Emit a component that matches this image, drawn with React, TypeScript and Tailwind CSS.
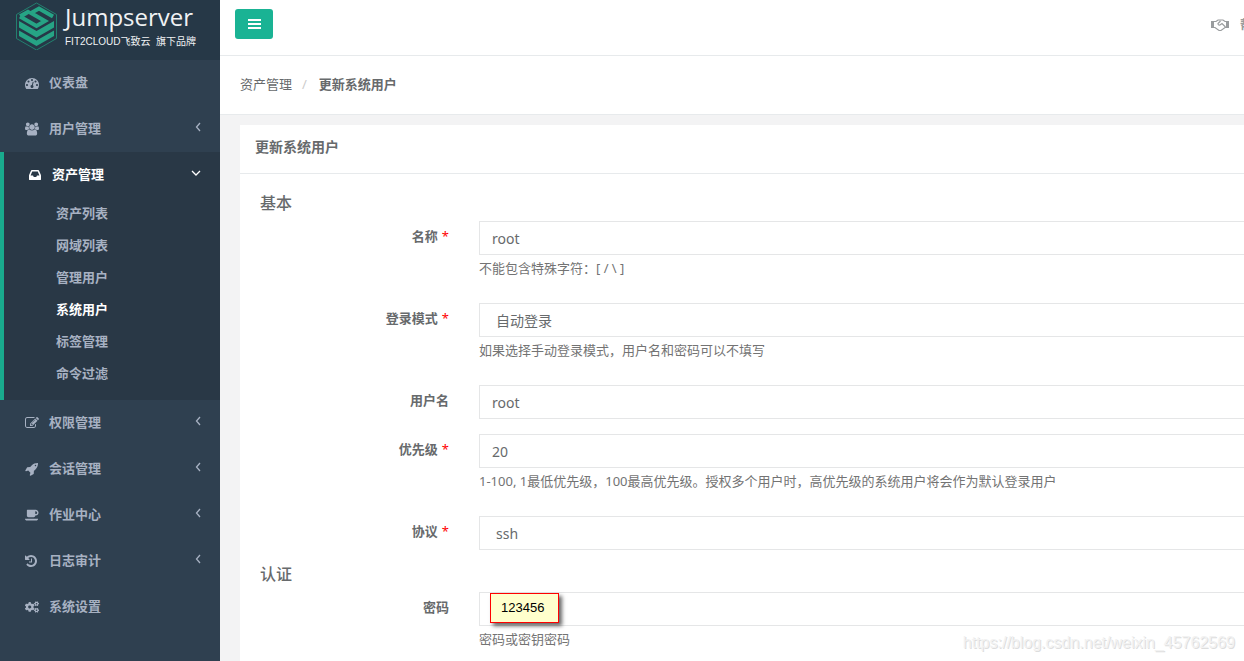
import type { ReactNode } from "react";
import { FaCogs, FaRegHandshake } from "react-icons/fa";

const icons = {
  dashboard: {
    box: "0 0 1792 1792",
    d: "M384 1152q0-53-37.5-90.5t-90.5-37.5-90.5 37.5-37.5 90.5 37.5 90.5 90.5 37.5 90.5-37.5 37.5-90.5zm192-448q0-53-37.5-90.5t-90.5-37.5-90.5 37.5-37.5 90.5 37.5 90.5 90.5 37.5 90.5-37.5 37.5-90.5zm428 481l101-382q6-26-7.5-48.5t-38.5-29.5-48 6.5-30 39.5l-101 382q-60 5-107 43.5t-63 98.5q-20 77 20 146t117 89 146-20 89-117q16-60-6-117t-72-91zm660-33q0-53-37.5-90.5t-90.5-37.5-90.5 37.5-37.5 90.5 37.5 90.5 90.5 37.5 90.5-37.5 37.5-90.5zm-640-640q0-53-37.5-90.5t-90.5-37.5-90.5 37.5-37.5 90.5 37.5 90.5 90.5 37.5 90.5-37.5 37.5-90.5zm448 192q0-53-37.5-90.5t-90.5-37.5-90.5 37.5-37.5 90.5 37.5 90.5 90.5 37.5 90.5-37.5 37.5-90.5zm320 448q0 261-141 483-19 29-54 29h-1402q-35 0-54-29-141-221-141-483 0-182 71-348t191-286 286-191 348-71 348 71 286 191 191 286 71 348z",
  },
  users: {
    box: "0 0 1920 1792",
    d: "M593 896q-162 5-265 128h-134q-82 0-138-40.5t-56-118.5q0-353 124-353 6 0 43.5 21t97.5 42.5 119 21.5q67 0 133-23-5 37-5 66 0 139 81 256zm1071 637q0 120-73 189.5t-194 69.5h-874q-121 0-194-69.5t-73-189.5q0-53 3.5-103.5t14-109 26.5-108.5 43-97.5 62-81 85.5-53.5 111.5-20q10 0 43 21.5t73 48 107 48 135 21.5 135-21.5 107-48 73-48 43-21.5q61 0 111.5 20t85.5 53.5 62 81 43 97.5 26.5 108.5 14 109 3.5 103.5zm-1024-1277q0 106-75 181t-181 75-181-75-75-181 75-181 181-75 181 75 75 181zm704 384q0 159-112.5 271.5t-271.5 112.5-271.5-112.5-112.5-271.5 112.5-271.5 271.5-112.5 271.5 112.5 112.5 271.5zm576 225q0 78-56 118.5t-138 40.5h-134q-103-123-265-128 81-117 81-256 0-29-5-66 66 23 133 23 59 0 119-21.5t97.5-42.5 43.5-21q124 0 124 353zm-128-609q0 106-75 181t-181 75-181-75-75-181 75-181 181-75 181 75 75 181z",
  },
  inbox: {
    box: "0 0 1792 1792",
    d: "M1151 960h316q-1-3-2.5-8.5t-2.5-7.5l-212-496h-708l-212 496q-1 3-2.5 8.5t-2.5 7.5h316l95 192h320zm513 30v482q0 26-19 45t-45 19h-1408q-26 0-45-19t-19-45v-482q0-62 25-123l238-552q10-25 36.5-42t52.5-17h832q26 0 52.5 17t36.5 42l238 552q25 61 25 123z",
  },
  edit: {
    box: "0 0 1792 1792",
    d: "M888 1184l116-116-152-152-116 116v56h96v96h56zm440-720q-16-16-33 1l-350 350q-17 17-1 33t33-1l350-350q17-17 1-33zm80 594v190q0 119-84.5 203.5t-203.5 84.5h-832q-119 0-203.5-84.5t-84.5-203.5v-832q0-119 84.5-203.5t203.5-84.5h832q63 0 117 25 15 7 18 23 3 17-9 29l-49 49q-14 14-32 8-23-6-45-6h-832q-66 0-113 47t-47 113v832q0 66 47 113t113 47h832q66 0 113-47t47-113v-126q0-13 9-22l64-64q15-15 35-7t20 29zm-96-738l288 288-672 672h-288v-288zm444 132l-92 92-288-288 92-92q28-28 68-28t68 28l152 152q28 28 28 68t-28 68z",
  },
  rocket: {
    box: "0 0 1792 1792",
    d: "M1440 448q0-40-28-68t-68-28-68 28-28 68 28 68 68 28 68-28 28-68zm224-288q0 249-75.5 430.5t-253.5 360.5q-81 80-195 176l-20 379q-2 16-16 26l-384 224q-7 4-16 4-12 0-23-9l-64-64q-13-14-8-32l85-276-281-281-276 85q-3 1-9 1-14 0-23-9l-64-64q-17-19-5-39l224-384q10-14 26-16l379-20q96-114 176-195 188-187 358-258t431-71q14 0 24 9.5t10 22.5z",
  },
  coffee: {
    box: "0 0 1920 1792",
    d: "M1664 576q0-80-56-136t-136-56h-64v384h64q80 0 136-56t56-136zm-1664 832h1792q0 106-75 181t-181 75h-1280q-106 0-181-75t-75-181zm1856-832q0 159-112.5 271.5t-271.5 112.5h-64v32q0 92-66 158t-158 66h-704q-92 0-158-66t-66-158v-736q0-26 19-45t45-19h1152q159 0 271.5 112.5t112.5 271.5z",
  },
  history: {
    box: "128 0 1792 1792",
    d: "M1664 896q0 156-61 298t-164 245-245 164-298 61q-172 0-327-72.5t-264-204.5q-7-10-6.5-22.5t8.5-20.5l137-138q10-9 25-9 16 2 23 12 73 95 179 147t225 52q104 0 198.5-40.5t163.5-109.5 109.5-163.5 40.5-198.5-40.5-198.5-109.5-163.5-163.5-109.5-198.5-40.5q-98 0-188 35.5t-160 101.5l137 138q31 30 14 69-17 40-59 40h-448q-26 0-45-19t-19-45v-448q0-42 40-59 39-17 69 14l130 129q107-101 244.5-156.5t284.5-55.5q156 0 298 61t245 164 164 245 61 298zm-640-288v448q0 14-9 23t-23 9h-320q-14 0-23-9t-9-23v-64q0-14 9-23t23-9h224v-352q0-14 9-23t23-9h64q14 0 23 9t9 23z",
  },
};

function Icon({ name }: { name: keyof typeof icons }) {
  return (
    <svg viewBox={icons[name].box} className="size-[14px] fill-current" aria-hidden="true">
      <path d={icons[name].d} />
    </svg>
  );
}

function Chevron({ open }: { open?: boolean }) {
  return (
    <svg
      viewBox="0 0 10 10"
      className="mb-1 ml-auto size-[10px] fill-none stroke-current stroke-[1.3]"
      aria-hidden="true"
    >
      <path d={open ? "M1 3L5 7l4-4" : "M7 1L3.500 5 7 9"} />
    </svg>
  );
}

const assetLinks = ["资产列表", "网域列表", "管理用户", "系统用户", "标签管理", "命令过滤"];

const menuTop: { label: string; icon: ReactNode; arrow: boolean }[] = [
  { label: "仪表盘", icon: <Icon name="dashboard" />, arrow: false },
  { label: "用户管理", icon: <Icon name="users" />, arrow: true },
];

const menuBottom: { label: string; icon: ReactNode; arrow: boolean }[] = [
  { label: "权限管理", icon: <Icon name="edit" />, arrow: true },
  { label: "会话管理", icon: <Icon name="rocket" />, arrow: true },
  { label: "作业中心", icon: <Icon name="coffee" />, arrow: true },
  { label: "日志审计", icon: <Icon name="history" />, arrow: true },
  { label: "系统设置", icon: <FaCogs className="size-[14px]" />, arrow: false },
];

function MenuItem({ label, icon, arrow }: { label: string; icon: ReactNode; arrow: boolean }) {
  return (
    <li>
      <a href="#" className="flex h-[46px] items-center pr-[17px] pl-[25px] hover:text-white">
        {icon}
        <span className="ml-[10px]">{label}</span>
        {arrow && <Chevron />}
      </a>
    </li>
  );
}

function Logo() {
  return (
    <svg viewBox="0 0 42 48" className="h-12 w-[42px]" aria-hidden="true">
      <path d="M21.500 1l20 11.500v24l-20 11.500-20-11.500v-24z" fill="none" stroke="#23806f" strokeWidth="1" />
      <path
        d="M38 14.500L24 6.500l-8 4.500 14 8-8.500 5L5 14.500"
        fill="none"
        stroke="#26a485"
        strokeWidth="4"
      />
      <g fill="#26a485">
        <path d="M4 12.500l9-5 4 2.500-10 6z" />
        <path d="M4 19l17.500 10L39 19v6.500l-17.500 10L4 25.500z" />
        <path d="M4 28.500l17.500 10 17.500-10V34l-17.500 10L4 34z" />
      </g>
    </svg>
  );
}

function Sidebar() {
  return (
    <nav className="w-[220px] shrink-0 bg-[#2f4050] text-[13px] font-semibold text-[#a7b1c2]">
      <a href="#" className="flex h-[60px] bg-[#263847] pt-[2px] pl-[15px] text-[#f0f2f4]">
        <Logo />
        <span className="ml-2 flex flex-col">
          <span className="font-['Open_Sans'] text-[24px] leading-[30px] font-normal">Jumpserver</span>
          <span className="font-['Liberation_Sans','Noto_Sans_CJK_SC',sans-serif] text-[10px] leading-5 font-normal whitespace-nowrap">
            FIT2CLOUD飞致云&nbsp; 旗下品牌
          </span>
        </span>
      </a>
      <ul>
        {menuTop.map((item) => (
          <MenuItem key={item.label} {...item} />
        ))}
        <li className="border-l-4 border-[#19aa8d] bg-[#293846] pb-[10px]">
          <a href="#" className="flex h-[46px] items-center pr-[19px] pl-6 text-white">
            <Icon name="inbox" />
            <span className="ml-[10px]">资产管理</span>
            <Chevron open />
          </a>
          <ul>
            {assetLinks.map((label) => (
              <li key={label}>
                <a
                  href="#"
                  className={`flex h-8 items-center pl-[52px] hover:text-white ${label === "系统用户" ? "text-white" : ""}`}
                >
                  {label}
                </a>
              </li>
            ))}
          </ul>
        </li>
        {menuBottom.map((item) => (
          <MenuItem key={item.label} {...item} />
        ))}
      </ul>
    </nav>
  );
}

type FieldProps = {
  id: string;
  label: string;
  required?: boolean;
  help?: string;
  children: ReactNode;
};

function Field({ id, label, required, help, children }: FieldProps) {
  return (
    <div className="mb-[15px] flex gap-[30px]">
      <label htmlFor={id} className="w-[189px] shrink-0 pt-[6px] text-right leading-[18px] font-bold">
        {label}
        {required && <span className="ml-1 font-normal text-[#ff0000]">*</span>}
      </label>
      <div className="min-w-0 flex-1">
        {children}
        {help && <p className="mt-1 mb-[11px] leading-[18px] text-[#737373]">{help}</p>}
      </div>
    </div>
  );
}

const control =
  "block h-[34px] w-full appearance-none border border-[#e5e6e7] bg-white text-[14px] text-[#676a6c] outline-none focus:border-[#1ab394]";

export default function App() {
  return (
    <div className="flex min-h-screen overflow-hidden bg-[#f3f3f4] font-['Noto_Sans','Noto_Sans_CJK_SC',sans-serif] text-[13px] text-[#676a6c]">
      <Sidebar />
      <div className="relative h-screen min-w-0 flex-1 overflow-hidden">
        {/* the page is wider than the window and runs past its right edge */}
        <main className="w-[calc(100%+60px)]">
          <header className="flex h-14 items-center border-b border-[#e7eaec] bg-white pr-[38px] pb-[7px] pl-[15px]">
            <button
              type="button"
              aria-label="菜单"
              className="flex h-[30px] w-[38px] items-center justify-center rounded-[3px] bg-[#1ab394] text-white"
            >
              <svg viewBox="0 0 13 12" className="h-3 w-[13px] fill-current" aria-hidden="true">
                <path d="M0 1h13v2H0zM0 5h13v2H0zM0 9h13v2H0z" />
              </svg>
            </button>
            <a href="#" className="ml-auto flex items-center gap-[10px] pt-[2px] font-semibold text-[#999c9e]">
              <svg
                viewBox="0 0 20 14"
                className="h-[14px] w-5 fill-none stroke-current stroke-[1.2]"
                aria-hidden="true"
              >
                <path d="M1 3h3v7H1zM16 3h3v7h-3z" fill="currentColor" stroke="none" />
                <path d="M4 3.500h2L8 2h5l2 1.500h1M4 9.500h1l4 3h2l4-3h1M10.500 3L8 5.500q0 2 2 1.500l2-1.500 3.500 3.500" />
              </svg>
              帮助
            </a>
          </header>

          <ol className="flex h-[59px] items-center border-b border-[#e7eaec] bg-white pl-5">
            <li>
              <a href="#">资产管理</a>
            </li>
            <li className="mr-3 ml-[10px] text-[#cccccc]">/</li>
            <li className="font-bold">更新系统用户</li>
          </ol>

          <section className="mt-[10px] ml-5 bg-white">
            <h5 className="h-[49px] border-b border-[#e7eaec] pt-[13px] pl-[15px] text-[14px] leading-[18px] font-semibold">
              更新系统用户
            </h5>
            <form className="px-5 pt-5 pb-10">
              <h3 className="mb-[9px] text-[16px] leading-[18px] font-medium">基本</h3>
              <Field id="name" label="名称" required help="不能包含特殊字符：[ / \ ]">
                <input id="name" defaultValue="root" className={`${control} px-3`} />
              </Field>
              <Field id="login" label="登录模式" required help="如果选择手动登录模式，用户名和密码可以不填写">
                <select id="login" className={`${control} px-4`}>
                  <option>自动登录</option>
                  <option>手动登录</option>
                </select>
              </Field>
              <Field id="username" label="用户名">
                <input id="username" defaultValue="root" className={`${control} px-3`} />
              </Field>
              <Field
                id="priority"
                label="优先级"
                required
                help="1-100, 1最低优先级，100最高优先级。授权多个用户时，高优先级的系统用户将会作为默认登录用户"
              >
                <input id="priority" defaultValue="20" className={`${control} px-3`} />
              </Field>
              <Field id="protocol" label="协议" required>
                <select id="protocol" className={`${control} px-4`}>
                  <option>ssh</option>
                  <option>rdp</option>
                </select>
              </Field>
              <h3 className="mb-[9px] text-[16px] leading-[18px] font-medium">认证</h3>
              <Field id="password" label="密码" help="密码或密钥密码">
                <div className="relative">
                  <input id="password" type="password" className={`${control} px-3`} />
                  <span className="absolute top-px left-[11px] flex h-[30px] w-[69px] items-center border border-[#ff0000] bg-[#ffffcc] pl-[10px] font-['Liberation_Sans'] text-[13px] text-black shadow-[3px_3px_4px_rgba(0,0,0,0.6)]">
                    123456
                  </span>
                </div>
              </Field>
            </form>
          </section>
        </main>
        <p className="absolute right-[9px] bottom-2 font-['Liberation_Sans'] text-[16px] leading-5 text-[#f2f2f2] [text-shadow:1px_1px_0_#dddddd]">
          https://blog.csdn.net/weixin_45762569
        </p>
      </div>
    </div>
  );
}
